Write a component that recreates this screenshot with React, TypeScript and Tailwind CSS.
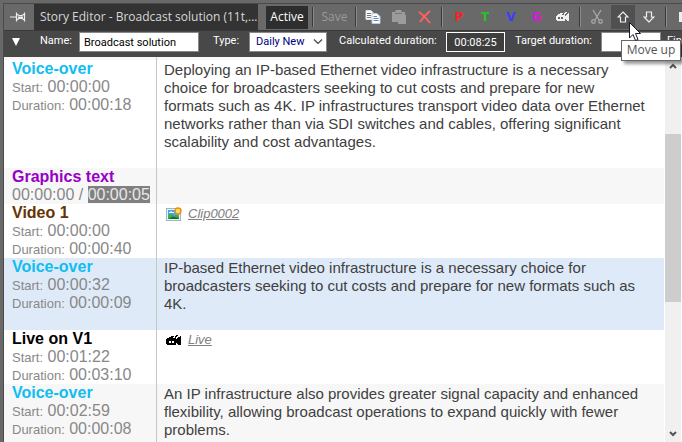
import { ReactNode } from "react";
import { clsx } from "clsx";

interface Story {
  kind: string;
  color: string;
  start: string;
  duration?: string;
  total?: string;
  text?: string[];
  clip?: string;
  icon?: "picture" | "camera";
  row: string;
}

const stories: Story[] = [
  {
    kind: "Voice-over",
    color: "text-[#10bdf2]",
    start: "00:00:00",
    duration: "00:00:18",
    text: [
      "Deploying an IP-based Ethernet video infrastructure is a necessary",
      "choice for broadcasters seeking to cut costs and prepare for new",
      "formats such as 4K. IP infrastructures transport video data over Ethernet",
      "networks rather than via SDI switches and cables, offering significant",
      "scalability and cost advantages.",
    ],
    row: "bg-white min-h-27",
  },
  {
    kind: "Graphics text",
    color: "text-[#9800c8]",
    start: "00:00:00",
    total: "00:00:05",
    row: "bg-[#f7f7f7] min-h-9",
  },
  {
    kind: "Video 1",
    color: "text-[#663300]",
    start: "00:00:00",
    duration: "00:00:40",
    clip: "Clip0002",
    icon: "picture",
    row: "bg-white",
  },
  {
    kind: "Voice-over",
    color: "text-[#10bdf2]",
    start: "00:00:32",
    duration: "00:00:09",
    text: [
      "IP-based Ethernet video infrastructure is a necessary choice for",
      "broadcasters seeking to cut costs and prepare for new formats such as",
      "4K.",
    ],
    row: "bg-[#dfeaf8] min-h-18",
  },
  {
    kind: "Live on V1",
    color: "text-black",
    start: "00:01:22",
    duration: "00:03:10",
    clip: "Live",
    icon: "camera",
    row: "bg-white",
  },
  {
    kind: "Voice-over",
    color: "text-[#10bdf2]",
    start: "00:02:59",
    duration: "00:00:08",
    text: [
      "An IP infrastructure also provides greater signal capacity and enhanced",
      "flexibility, allowing broadcast operations to expand quickly with fewer",
      "problems.",
    ],
    row: "bg-[#f7f7f7] grow",
  },
];

function CameraIcon({ className }: { className?: string }) {
  return (
    <svg viewBox="0 0 14 10" className={clsx("shrink-0", className)} fill="currentColor" shapeRendering="crispEdges">
      <path fillRule="evenodd" d="M1 3 H9 V9 H1 V8 H0 V4 H1 Z M2 5 V7 H4 V5 Z M5 5 V7 H7 V5 Z" />
      <path d="M2 2 H4 V1 H7 V2 H6 V3 H2 Z" />
      <path d="M8 1 H9 V0 H11 V1 H10 V2 H9 V3 H8 Z" />
      <path d="M9 4 H10 V3 H11 V2 H12 V1 H13 V9 H11 V8 H10 V7 H9 Z" />
    </svg>
  );
}

function PictureIcon() {
  return (
    <svg viewBox="0 0 16 14" className="w-4 h-[14px] shrink-0">
      <rect x="0.5" y="1.5" width="14" height="12" fill="#eaf3fa" stroke="#9db4c5" />
      <rect x="2" y="3" width="11" height="9" fill="#3aa8ec" />
      <path d="M2 8 L5 7 L8 9 L10 8 L13 9 V12 H2 Z" fill="#45ad42" />
      <path d="M2 12 L7 9.500 L13 11 V12 Z" fill="#1c6b35" />
      <path d="M3 6 H8 V5 H6 L5 4 L4 5 H3 Z" fill="#fff" />
      <circle cx="12" cy="4" r="3.700" fill="#f58a1f" />
      <circle cx="12" cy="4" r="2.200" fill="#ffe34d" />
    </svg>
  );
}

function Separator() {
  return <div className="w-0.5 h-5 mx-0.5 shrink-0 border-l border-l-[#3a3a3a] border-r border-r-[#8c8c8c]" />;
}

function ToolButton({ label, active, className, children }: { label: string; active?: boolean; className?: string; children: ReactNode }) {
  return (
    <button
      aria-label={label}
      className={clsx("relative w-6 h-6 shrink-0 flex items-center justify-center", active && "bg-[#505050]", className)}
    >
      {children}
    </button>
  );
}

function LetterButton({ label, className, children }: { label: string; className: string; children: ReactNode }) {
  return (
    <ToolButton label={label} className={clsx("font-['DejaVu_Sans',sans-serif] text-xs font-bold", className)}>
      {children}
    </ToolButton>
  );
}

function Arrow({ down }: { down?: boolean }) {
  return (
    <svg viewBox="0 0 12 12" className={clsx("w-3 h-3", down && "rotate-180")} fill="none" stroke="#f0f0f0" strokeWidth="1.2">
      <path d="M6 1 L11 6 H8.5 V11 H3.5 V6 H1 Z" />
    </svg>
  );
}

function Toolbar() {
  return (
    <div className="h-[26px] shrink-0 flex items-center gap-0.5 bg-[#696969]">
      <button aria-label="Pin" className="w-7 h-full shrink-0 flex items-center justify-center">
        <svg viewBox="0 0 16 10" className="w-4 h-[10px]" fill="none" stroke="#eee" strokeWidth="1.2">
          <path d="M0 5 H6 M6.5 0.5 V9.5 M14.5 0.5 V9.5 M6.5 2 L9 3.5 H12 L14.5 2 M6.5 8 L9 6.5 H12 L14.5 8" />
          <path d="M8 5.5 H13" strokeWidth="2" />
        </svg>
      </button>
      <h1 className="w-[224px] h-full shrink-0 bg-[#333] px-1.5 text-xs leading-[26px] text-[#d8d8d8] whitespace-nowrap">
        Story Editor - Broadcast solution (11t,...
      </h1>
      <button className="ml-1.5 w-[42px] h-[23px] shrink-0 bg-[#2e2e2e] text-xs text-white">Active</button>
      <Separator />
      <button className="w-[33px] shrink-0 text-xs text-[#999]">Save</button>
      <Separator />
      <ToolButton label="Copy">
        <svg viewBox="0 0 16 14" className="w-4 h-[14px]">
          <path d="M1 0.5 H6 L8 2.5 V9.5 H1 Z" fill="#fff" stroke="#ddd" />
          <path d="M2 3.5 H6 M2 5.5 H6 M2 7.5 H6" stroke="#777" />
          <path d="M7 3.5 H12 L15 6.5 V13.5 H7 Z" fill="#fff" stroke="#b5cce8" />
          <path d="M8.5 6.5 H12 M8.5 8.5 H13.5 M8.5 10.5 H13.5" stroke="#5f86b5" />
        </svg>
      </ToolButton>
      <ToolButton label="Paste">
        <svg viewBox="0 0 16 14" className="w-4 h-[14px]" fill="#9b9b9b">
          <path d="M1 2 H4 L5 0 H10 L11 2 H14 V5 H15 V14 H7 V12 H1 Z" />
          <path d="M4 3 H11 V4 H4 Z" fill="#777" />
        </svg>
      </ToolButton>
      <ToolButton label="Delete">
        <svg viewBox="0 0 14 14" className="w-[14px] h-[14px]" fill="none" stroke="#ff6060" strokeWidth="2">
          <path d="M1 2 Q7 6 12 13 M12 1 Q6 6 2 12" />
        </svg>
      </ToolButton>
      <Separator />
      <LetterButton label="Prompter" className="text-[#f52222]">P</LetterButton>
      <LetterButton label="Text" className="text-[#22c522]">T</LetterButton>
      <LetterButton label="Video" className="text-[#3c3cff]">V</LetterButton>
      <LetterButton label="Graphics" className="text-[#e010e0]">G</LetterButton>
      <ToolButton label="Camera" className="text-[#f0f0f0]">
        <CameraIcon className="w-[14px] h-[10px]" />
      </ToolButton>
      <Separator />
      <ToolButton label="Cut">
        <svg viewBox="0 0 12 16" className="w-3 h-4" fill="none" stroke="#a8a8a8" strokeWidth="1.3">
          <path d="M2 1 L8 11 M10 1 L4 11" />
          <circle cx="2.5" cy="12.5" r="1.8" />
          <circle cx="9.5" cy="12.5" r="1.8" />
        </svg>
      </ToolButton>
      <ToolButton label="Move up" active>
        <Arrow />
        {/* tooltip and pointer over the bars */}
        <span className="absolute z-10 top-[35px] left-2.5 w-[60px] h-[21px] bg-white border border-[#666] text-xs leading-[18px] text-[#555] whitespace-nowrap shadow-[3px_3px_3px_rgba(0,0,0,0.4)]">
          Move up
        </span>
        <svg viewBox="0 0 12 19" className="absolute z-20 top-[17px] left-[18px] w-3 h-[19px]">
          <path d="M0.5 0.5 V16 L4 12.5 L6.5 18.5 L9 17.5 L6.5 11.5 H11.5 Z" fill="#fff" stroke="#1a1a2a" />
        </svg>
      </ToolButton>
      <ToolButton label="Move down">
        <Arrow down />
      </ToolButton>
      <Separator />
      <ToolButton label="More">
        <svg viewBox="0 0 8 10" className="w-2 h-[10px]" fill="#eee">
          <path d="M0 0 H8 V10 H0 Z" />
        </svg>
      </ToolButton>
    </div>
  );
}

function FieldsBar() {
  return (
    <div className="h-[27px] shrink-0 flex items-start pt-px bg-[#484848] border-t border-[#3a3a3a] font-[Roboto,sans-serif] text-[11px] text-white whitespace-nowrap">
      <button aria-label="Collapse" className="w-9 h-[19px] pl-2 shrink-0">
        <svg viewBox="0 0 8 8" className="w-2 h-2" fill="#fff">
          <path d="M0 0 H8 L4 8 Z" />
        </svg>
      </button>
      <label htmlFor="name" className="w-[39px] shrink-0 leading-[18px]">Name:</label>
      <input id="name" defaultValue="Broadcast solution" className="w-[120px] h-5 shrink-0 px-1 bg-white border border-[#888] text-black" />
      <label htmlFor="type" className="ml-3.5 w-9 shrink-0 leading-[18px]">Type:</label>
      <div className="relative shrink-0">
        <select id="type" className="w-[78px] h-5 px-1.5 appearance-none bg-white border border-[#888] leading-[18px] text-[#000080]">
          <option>Daily New</option>
        </select>
        <svg viewBox="0 0 10 6" className="absolute right-1 top-[7px] w-[10px] h-[6px]" fill="none" stroke="#444" strokeWidth="1.2">
          <path d="M1 0.5 L5 4.5 L9 0.5" />
        </svg>
      </div>
      <label htmlFor="calculated" className="ml-3 w-[107px] shrink-0 leading-[18px]">Calculated duration:</label>
      <input id="calculated" readOnly value="00:08:25" className="w-[59px] h-5 shrink-0 px-1 bg-[#3e3e3e] border border-white text-white text-center" />
      <label htmlFor="target" className="ml-2.5 w-[86px] shrink-0 leading-[18px]">Target duration:</label>
      <input id="target" className="w-[60px] h-5 shrink-0 bg-white border border-[#888]" />
      <span className="ml-1.5 shrink-0 leading-[18px]">Fin</span>
    </div>
  );
}

function StoryRow({ story }: { story: Story }) {
  return (
    <div className={clsx("flex", story.row)}>
      <div className="w-[153px] shrink-0 pl-2 border-r border-[#c6c6c6] text-base leading-[18px] text-[#888] whitespace-nowrap">
        <p className={clsx("h-[18px] font-bold", story.color)}>{story.kind}</p>
        {story.total ? (
          <p className="h-[18px]">
            {story.start} / <span className="bg-[#808080] text-[#e8e8e8]">{story.total}</span>
          </p>
        ) : (
          <>
            <p className="h-[18px]"><span className="text-[13px]">Start:</span> {story.start}</p>
            <p className="h-[18px]"><span className="text-[13px]">Duration:</span> {story.duration}</p>
          </>
        )}
      </div>
      <div className="flex-1 pt-px pl-[7px] text-[15px] leading-[18px] text-[#404040] whitespace-nowrap">
        {story.text?.map((line) => <p key={line}>{line}</p>)}
        {story.clip && (
          <div className="flex items-center gap-1.5 pl-0.5">
            {story.icon === "picture" ? <PictureIcon /> : <CameraIcon className="w-4 h-[11px] text-black" />}
            <a href="#" className="text-[13px] italic underline text-[#808080]">{story.clip}</a>
          </div>
        )}
      </div>
    </div>
  );
}

function Scrollbar() {
  return (
    <div className="w-[17px] shrink-0 flex flex-col border-l border-white bg-[#f0f0f0]">
      <button aria-label="Scroll up" className="h-[17px] flex items-center justify-center">
        <svg viewBox="0 0 8 6" className="w-2 h-1.5" fill="none" stroke="#555" strokeWidth="2"><path d="M1 5 L4 2 L7 5" /></svg>
      </button>
      <div className="flex-1 flex flex-col">
        <div className="h-[17%]" />
        <div className="h-[48%] bg-[#cdcdcd]" />
      </div>
      <button aria-label="Scroll down" className="h-[17px] flex items-center justify-center">
        <svg viewBox="0 0 8 6" className="w-2 h-1.5" fill="none" stroke="#555" strokeWidth="2"><path d="M1 1 L4 4 L7 1" /></svg>
      </button>
    </div>
  );
}

export default function App() {
  return (
    <div className="h-screen overflow-hidden flex flex-col bg-[#696969] pl-[3px] font-['Open_Sans',sans-serif]">
      <div className="h-1 shrink-0 border-b border-[#4a4a4a]" />
      <div className="flex-1 min-h-0 flex flex-col border-l border-[#4a4a4a]">
        <Toolbar />
        <FieldsBar />
        <div className="flex-1 min-h-0 flex bg-white pr-px font-['Liberation_Sans',sans-serif]">
          <main className="flex-1 min-w-0 flex flex-col">
            {/* end of the row scrolled out above */}
            <div className="h-[3px] shrink-0 bg-[#f7f7f7]">
              <div className="w-[153px] h-full border-r border-[#c6c6c6]" />
            </div>
            {stories.map((story, index) => (
              <StoryRow key={index} story={story} />
            ))}
          </main>
          <Scrollbar />
        </div>
      </div>
    </div>
  );
}
